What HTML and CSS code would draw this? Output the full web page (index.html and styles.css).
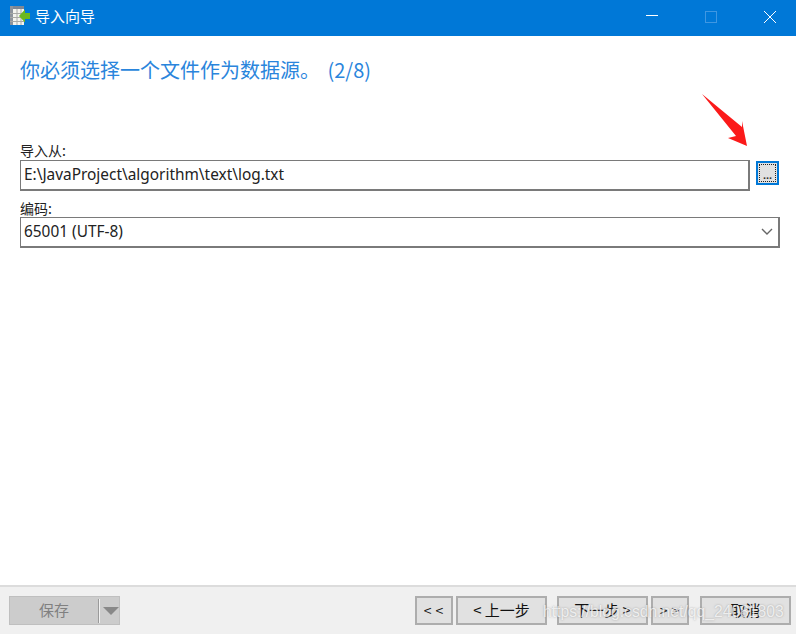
FILE: index.html
```html
<!DOCTYPE html>
<html lang="zh-CN">
<head>
    <meta charset="UTF-8">
    <title>导入向导</title>
    <link rel="stylesheet" href="styles.css">
</head>
<body>
    <div class="window">
        <header class="titlebar">
            <svg class="app-icon" width="20" height="20" viewBox="0 0 20 20">
                <rect x="0" y="0" width="14" height="19" fill="#f4f4ee"/>
                <rect x="0" y="0" width="14" height="3" fill="#7d8794"/>
                <rect x="0" y="0" width="3" height="19" fill="#8d949c"/>
                <path d="M0 7.5h14M0 11.5h14M0 15.5h14M7 3v16M11 3v16" stroke="#a9aaa6" fill="none"/>
                <path d="M9 10l6-6.5v3.5h5v6h-5v3.5z" fill="#6cb81e"/>
            </svg>
            <span class="title">导入向导</span>
            <div class="win-controls">
                <svg width="12" height="12" viewBox="0 0 12 12"><path d="M0 4.5h12" stroke="#fff" fill="none"/></svg>
                <svg width="12" height="12" viewBox="0 0 12 12"><rect x="0.5" y="0.5" width="11" height="11" stroke="#3f97e2" fill="none"/></svg>
                <svg width="12" height="12" viewBox="0 0 12 12"><path d="M0 0l12 12M12 0L0 12" stroke="#fff" fill="none"/></svg>
            </div>
        </header>

        <main class="content">
            <h1 class="heading">你必须选择一个文件作为数据源。 (2/8)</h1>

            <label class="field-label first">导入从:</label>
            <div class="file-row">
                <div class="text-box">E:\JavaProject\algorithm\text\log.txt</div>
                <button class="browse"><span class="browse-inner">...</span></button>
            </div>

            <label class="field-label">编码:</label>
            <div class="select-box">
                <span>65001 (UTF-8)</span>
                <svg width="12" height="7" viewBox="0 0 12 7"><path d="M1 1l5 5 5-5" stroke="#666" stroke-width="1.4" fill="none"/></svg>
            </div>
        </main>

        <footer class="footer">
            <div class="save-btn">
                <span class="save-label">保存</span>
                <span class="save-split"></span>
                <span class="save-arrow"></span>
            </div>
            <div class="nav">
                <button class="btn small">&lt;&lt;</button>
                <button class="btn">&lt; 上一步</button>
                <button class="btn next">下一步 &gt;</button>
                <button class="btn small">&gt;&gt;</button>
                <button class="btn cancel">取消</button>
            </div>
        </footer>

        <svg class="arrow" width="60" height="60" viewBox="0 0 60 60">
            <path d="M2 4L42 37 42 31 47 56 28 48 36 46z" fill="#fb1a1a"/>
        </svg>
        <div class="watermark">https://blog.csdn.net/qq_24081803</div>
    </div>
</body>
</html>
```

FILE: styles.css
```css
* {
    box-sizing: border-box;
    margin: 0;
    padding: 0;
}
body {
    font-family: "Noto Sans CJK SC", "Liberation Sans", sans-serif;
    background: #fff;
    color: #222;
    overflow: hidden;
}
.window {
    width: 796px;
    height: 634px;
    display: flex;
    flex-direction: column;
    position: relative;
}
.titlebar {
    height: 36px;
    background: #0078d7;
    color: #fff;
    display: flex;
    align-items: center;
    padding-left: 10px;
}
.app-icon {
    margin-bottom: 4px;
}
.title {
    font-size: 15px;
    margin-left: 5px;
    margin-bottom: 5px;
}
.win-controls {
    margin-left: auto;
    margin-bottom: 2px;
    padding-right: 20px;
    display: flex;
    align-items: center;
    gap: 47px;
}
.win-controls svg {
    display: block;
}
.content {
    flex: 1;
    padding: 0 16px 0 20px;
}
.heading {
    font-size: 20px;
    font-weight: normal;
    line-height: 26px;
    color: #2a85dc;
    margin-top: 21px;
    word-spacing: 3px;
}
.field-label {
    display: block;
    font-size: 14px;
    line-height: 16px;
    height: 17px;
    margin-top: 9px;
    color: #222;
}
.field-label.first {
    margin-top: 59px;
    height: 18px;
}
.file-row {
    display: flex;
    align-items: flex-start;
    gap: 6px;
}
.text-box,
.select-box {
    font-family: "Noto Sans", "Noto Sans CJK SC", sans-serif;
    font-size: 15.4px;
    color: #222;
    border: 2px solid #7a7a7a;
    border-width: 1px 2px 2px 1px;
    background: #fff;
    display: flex;
    align-items: center;
    padding-left: 3px;
    padding-bottom: 2px;
}
.text-box {
    width: 730px;
    height: 31px;
}
.browse {
    width: 23px;
    height: 24px;
    margin-top: 1px;
    border: 2px solid #0078d7;
    background: #e1e1e1;
    padding: 1px;
}
.browse-inner {
    display: flex;
    align-items: flex-end;
    justify-content: center;
    width: 100%;
    height: 100%;
    border: 1px dotted #222;
    font-family: "Liberation Sans", sans-serif;
    font-size: 11px;
    font-weight: bold;
    line-height: 12px;
    color: #333;
}
.select-box {
    width: 760px;
    height: 31px;
    justify-content: space-between;
    padding-right: 5px;
}
.footer {
    height: 49px;
    background: #f0f0f0;
    border-top: 2px solid #dcdcdc;
    display: flex;
    align-items: flex-start;
    justify-content: space-between;
    padding: 9px 5px 0 9px;
}
.save-btn {
    width: 111px;
    height: 29px;
    background: #cccccc;
    border: 1px solid #bfbfbf;
    display: flex;
    align-items: center;
}
.save-label {
    width: 89px;
    text-align: center;
    font-size: 15px;
    color: #808080;
    margin-bottom: 2px;
}
.save-split {
    width: 1px;
    height: 24px;
    background: #f2f2f2;
    border-left: 1px solid #9a9a9a;
    box-sizing: content-box;
}
.save-arrow {
    width: 0;
    height: 0;
    margin-left: 3px;
    border-left: 8px solid transparent;
    border-right: 8px solid transparent;
    border-top: 8px solid #888;
}
.nav {
    display: flex;
}
.btn {
    width: 91px;
    height: 29px;
    background: #e1e1e1;
    border: 2px solid #adadad;
    font-family: "Noto Sans CJK SC", "Liberation Sans", sans-serif;
    font-size: 15px;
    color: #111;
    margin-right: 3px;
    padding-bottom: 2px;
}
.btn.small {
    width: 38px;
    letter-spacing: 4px;
    font-size: 14px;
    padding-left: 3px;
}
.btn.next {
    margin-left: 7px;
}
.btn.cancel {
    margin-left: 8px;
    margin-right: 0;
}
.arrow {
    position: absolute;
    left: 700px;
    top: 90px;
}
.watermark {
    position: absolute;
    left: 543px;
    top: 603px;
    font-family: "Liberation Sans", sans-serif;
    font-size: 15.7px;
    line-height: 18px;
    color: rgba(255, 255, 255, 0.75);
    text-shadow: 0 0 2px rgba(110, 110, 110, 0.55);
    white-space: nowrap;
}
```
